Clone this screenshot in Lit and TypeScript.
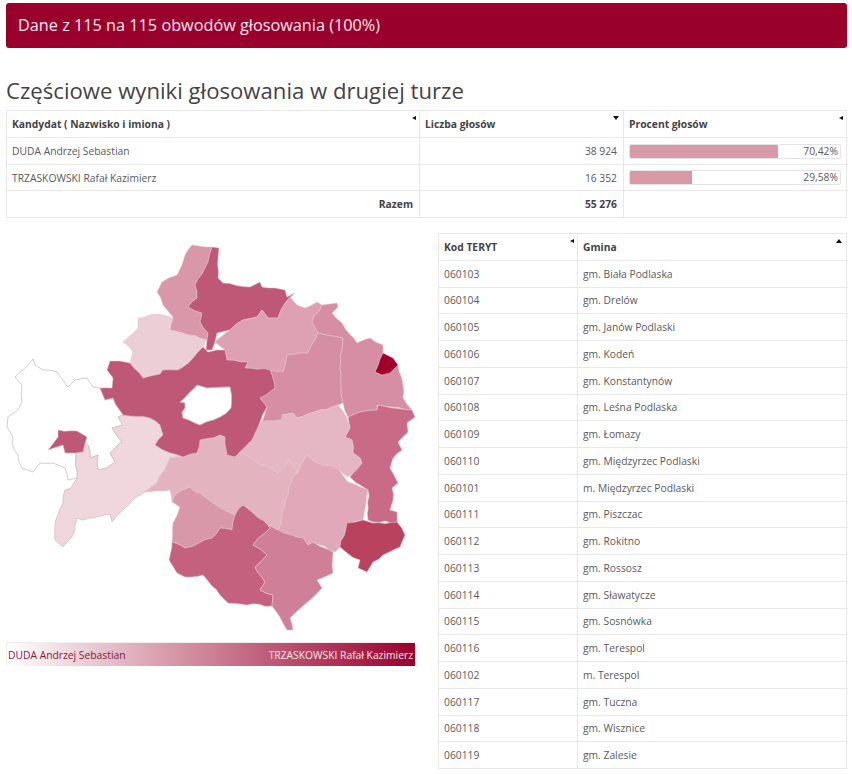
import { LitElement, html, css, svg } from "lit";
import { customElement } from "lit/decorators.js";

const REGIONS: [string, string][] = [
  ["#ffffff", "33,359 35,365 43,370 57,372 68,387 75,380 87,378 93,387 100,388 105,400 113,398 123,415 118,417 123,425 112,428 122,442 120,443 110,453 115,462 107,468 98,470 98,455 90,458 88,445 83,440 76,453 77,478 68,480 65,468 52,463 40,463 33,472 22,468 12,442 13,438 7,427 8,417 18,410 22,402 22,385 15,377"],
  ["#f0d7de", "123,415 150,418 160,425 163,435 155,445 163,450 183,457 170,458 157,483 145,492 135,498 112,522 110,514 83,520 77,518 72,537 63,547 55,540 55,527 58,515 63,503 65,490 71,488 77,478 76,453 83,440 88,445 90,458 98,455 98,470 107,468 115,462 110,453 120,443 122,442 112,428 123,425 118,417"],
  ["#d998aa", "192,245 212,247 205,268 195,285 197,298 188,307 202,313 200,322 208,333 207,340 170,330 173,317 163,305 157,292 162,282 177,275 182,265 185,255"],
  ["#ecced7", "138,318 158,314 173,318 170,330 207,340 203,347 183,367 178,370 163,370 160,374 143,378 130,363 133,352 123,342 138,328"],
  ["#be5876", "212,247 219,248 218,258 218,278 223,283 250,287 260,282 262,287 275,288 285,290 287,297 295,293 286,302 278,318 268,318 262,310 257,317 243,320 230,330 217,333 215,342 212,350 206,350 207,340 208,333 200,322 202,313 188,307 197,298 195,285 205,268"],
  ["#dea1b3", "215,342 230,330 243,320 257,317 262,310 268,318 278,318 286,302 290,297 297,305 305,308 317,302 322,305 312,322 318,333 308,353 287,355 283,372 245,368 248,362 227,360 225,350"],
  ["#d68ea4", "270,370 283,372 287,355 308,353 318,333 343,338 340,368 343,403 338,405 297,418 293,413 282,415 282,420 262,422 267,407 260,398 275,388"],
  ["#d58ea3", "312,322 322,305 337,303 338,307 332,313 342,323 357,343 370,338 383,345 383,353 375,372 382,375 398,365 403,385 403,398 412,410 392,407 377,405 377,410 360,412 348,417 343,403 340,368 343,338 318,333"],
  ["#a0002c", "383,353 393,358 398,365 390,373 382,375 375,372"],
  ["#c96a87", "348,417 360,412 377,410 378,405 392,408 412,410 415,417 407,423 408,432 398,442 402,450 393,458 390,468 398,483 392,488 393,500 390,510 397,512 397,522 373,522 368,520 368,490 350,477 362,463 360,458 353,453 352,440 345,437 350,428"],
  ["#e5b7c4", "260,422 282,420 282,415 293,413 297,418 338,405 347,418 350,428 345,437 352,440 353,453 360,458 362,463 348,477 338,468 315,462 307,455 298,473 289,460 278,473 238,452 252,440"],
  ["#e0a8b8", "307,455 315,462 338,468 348,482 368,490 363,520 347,525 340,547 335,552 313,542 308,545 303,538 278,530 293,475 298,473"],
  ["#e3b3c0", "170,458 183,457 197,453 200,440 220,435 225,437 227,455 235,457 238,452 278,473 289,460 298,473 293,475 278,530 268,525 243,505 235,515 220,508 190,487 175,495 172,502 170,490 145,492 157,483"],
  ["#d998aa", "172,502 175,495 190,487 220,508 235,515 232,530 220,528 212,538 185,548 172,542 173,523 180,507"],
  ["#c4617f", "243,505 268,525 270,528 265,533 253,545 267,555 255,567 265,582 260,590 273,595 272,606 228,603 220,595 203,575 185,577 177,573 169,560 172,542 185,548 212,538 220,528 232,530 235,515"],
  ["#d07f99", "268,525 278,530 303,538 308,545 313,542 333,552 333,573 317,580 322,588 310,600 290,618 293,630 287,630 275,610 272,606 273,595 260,590 265,582 255,567 267,555 253,545 265,533 270,528"],
  ["#b9425f", "347,523 363,520 373,523 397,522 405,535 400,547 383,555 373,562 367,572 358,568 360,560 347,553 340,547"],
  ["#be5876", "110,361 120,361 130,363 143,378 160,374 163,370 178,370 183,367 203,347 208,352 217,350 225,350 227,360 248,362 245,368 270,370 275,388 260,398 267,407 260,422 252,440 235,457 227,455 225,437 220,435 200,440 197,453 183,457 163,450 155,445 163,435 160,425 150,418 123,415 113,398 105,400 100,388 112,388 113,378 107,370"],
  ["#ffffff", "180,402 197,385 207,388 230,387 231,408 220,417 200,425 183,418 182,412 185,408 185,403"],
  ["#be5876", "58,430 77,431 87,437 83,452 75,453 65,453 63,445 48,450 52,445 58,437"],
];

/* Gives every long border a small, repeatable wobble. The offset depends only on the
   two end points, so two neighbouring regions bend their shared border identically. */
function wobble(points: string): string {
  const pts = points.split(" ").map((p) => p.split(",").map(Number));
  const out: string[] = [];
  pts.forEach((a, i) => {
    const b = pts[(i + 1) % pts.length];
    out.push(`${a[0]},${a[1]}`);
    const [p, q] = a[0] < b[0] || (a[0] === b[0] && a[1] < b[1]) ? [a, b] : [b, a];
    const dx = q[0] - p[0];
    const dy = q[1] - p[1];
    const len = Math.hypot(dx, dy);
    const steps = Math.floor(len / 6);
    if (steps < 2) return;
    const mids: string[] = [];
    for (let s = 1; s < steps; s++) {
      const h = Math.sin((p[0] * 12.9 + p[1] * 78.2 + q[0] * 37.7 + q[1] * 11.3 + s * 5.1)) * 43758.5;
      const off = (h - Math.floor(h) - 0.5) * 2.2;
      const t = s / steps;
      mids.push(`${(p[0] + dx * t - (dy / len) * off).toFixed(1)},${(p[1] + dy * t + (dx / len) * off).toFixed(1)}`);
    }
    if (p !== a) mids.reverse();
    out.push(...mids);
  });
  return out.join(" ");
}

const GMINY: [string, string][] = [
  ["060103", "gm. Biała Podlaska"],
  ["060104", "gm. Drelów"],
  ["060105", "gm. Janów Podlaski"],
  ["060106", "gm. Kodeń"],
  ["060107", "gm. Konstantynów"],
  ["060108", "gm. Leśna Podlaska"],
  ["060109", "gm. Łomazy"],
  ["060110", "gm. Międzyrzec Podlaski"],
  ["060101", "m. Międzyrzec Podlaski"],
  ["060111", "gm. Piszczac"],
  ["060112", "gm. Rokitno"],
  ["060113", "gm. Rossosz"],
  ["060114", "gm. Sławatycze"],
  ["060115", "gm. Sosnówka"],
  ["060116", "gm. Terespol"],
  ["060102", "m. Terespol"],
  ["060117", "gm. Tuczna"],
  ["060118", "gm. Wisznice"],
  ["060119", "gm. Zalesie"],
];

@customElement("app-root")
export class AppRoot extends LitElement {
  static styles = css`
    :host {
      display: block;
      box-sizing: border-box;
      padding: 3px 5px 0 6px;
      font-family: "Open Sans", "Noto Sans", sans-serif;
      font-size: 10.3px;
      color: #5a5a5a;
      background: #fff;
    }
    .banner {
      height: 45px;
      box-sizing: border-box;
      background: #9a002c;
      border-radius: 3px;
      color: #fbe9ee;
      font-size: 16.25px;
      line-height: 45px;
      padding-left: 12px;
    }
    h2 {
      margin: 25px 0 2px;
      font-size: 22.15px;
      line-height: 35px;
      height: 35px;
      font-weight: 400;
      color: #444;
    }
    table {
      border-collapse: collapse;
      table-layout: fixed;
      width: 100%;
    }
    th, td {
      border: 1px solid #e8e8e8;
      padding: 0 6px 0 5px;
      text-align: left;
      font-size: 10.3px;
      white-space: nowrap;
      position: relative;
    }
    th { font-weight: 700; color: #444; }
    .results th, .results td { height: 26px; }
    .results td.short { height: 25px; }
    .right { text-align: right; }
    .total { font-weight: 700; color: #444; }
    td.barcell { padding: 0 5px; }
    .arrow {
      position: absolute;
      right: 3px;
      top: 5px;
      width: 0;
      height: 0;
    }
    .a-left { border: 2.5px solid transparent; border-left: 0; border-right: 4px solid #111; }
    .a-down { border: 3px solid transparent; border-bottom: 0; border-top: 4px solid #111; right: 4px; }
    .a-up { border: 3px solid transparent; border-top: 0; border-bottom: 4px solid #111; right: 4px; }
    .bar {
      position: relative;
      height: 15px;
      box-sizing: border-box;
      border: 1px solid #e4e4e4;
      border-radius: 2px;
      text-align: right;
      line-height: 13px;
      padding-right: 2px;
      overflow: hidden;
    }
    .fill {
      position: absolute;
      left: 0;
      top: 0;
      bottom: 0;
      background: #d899a8;
    }
    .label { position: relative; }
    .cols {
      display: grid;
      grid-template-columns: 409px 409px;
      column-gap: 23px;
      margin-top: 15px;
    }
    .map { display: block; width: 409px; height: 409px; }
    .legend {
      height: 24px;
      display: flex;
      justify-content: space-between;
      align-items: center;
      padding: 0 2px 0 1px;
      background: linear-gradient(to right, #ffffff, #9a002c);
      box-sizing: border-box;
      border: 1px solid #eee;
      border-width: 1px 0 0 1px;
    }
    .legend .l { color: #7e1c3c; }
    .legend .r { color: #fbe9ee; }
    .gminy th, .gminy td { height: 25.75px; }
  `;

  render() {
    return html`
      <div class="banner">Dane z 115 na 115 obwodów głosowania (100%)</div>
      <h2>Częściowe wyniki głosowania w drugiej turze</h2>
      <table class="results">
        <colgroup><col style="width:413px" /><col style="width:204px" /><col /></colgroup>
        <tr>
          <th>Kandydat ( Nazwisko i imiona )<span class="arrow a-left"></span></th>
          <th>Liczba głosów<span class="arrow a-down"></span></th>
          <th>Procent głosów<span class="arrow a-left"></span></th>
        </tr>
        <tr>
          <td>DUDA Andrzej Sebastian</td>
          <td class="right">38 924</td>
          <td class="barcell"><div class="bar"><div class="fill" style="width:70.42%"></div><span class="label">70,42%</span></div></td>
        </tr>
        <tr>
          <td class="short">TRZASKOWSKI Rafał Kazimierz</td>
          <td class="right short">16 352</td>
          <td class="barcell short"><div class="bar"><div class="fill" style="width:29.58%"></div><span class="label">29,58%</span></div></td>
        </tr>
        <tr>
          <td class="right total">Razem</td>
          <td class="right total">55 276</td>
          <td></td>
        </tr>
      </table>
      <div class="cols">
        <div>
          <svg class="map" viewBox="6 233 409 409">
            ${REGIONS.map(([fill, points], i) => svg`<polygon points=${wobble(points)} fill=${fill} stroke=${fill === "#ffffff" || i === 1 ? "#c9c0c3" : "#e3c6cf"} stroke-width=${fill === "#ffffff" || i === 1 ? 0.8 : 0.5} stroke-linejoin="round"></polygon>`)}
          </svg>
          <div class="legend"><span class="l">DUDA Andrzej Sebastian</span><span class="r">TRZASKOWSKI Rafał Kazimierz</span></div>
        </div>
        <table class="gminy">
          <colgroup><col style="width:139px" /><col /></colgroup>
          <tr>
            <th>Kod TERYT<span class="arrow a-left"></span></th>
            <th>Gmina<span class="arrow a-up"></span></th>
          </tr>
          ${GMINY.map(([k, g]) => html`<tr><td>${k}</td><td>${g}</td></tr>`)}
        </table>
      </div>
    `;
  }
}
